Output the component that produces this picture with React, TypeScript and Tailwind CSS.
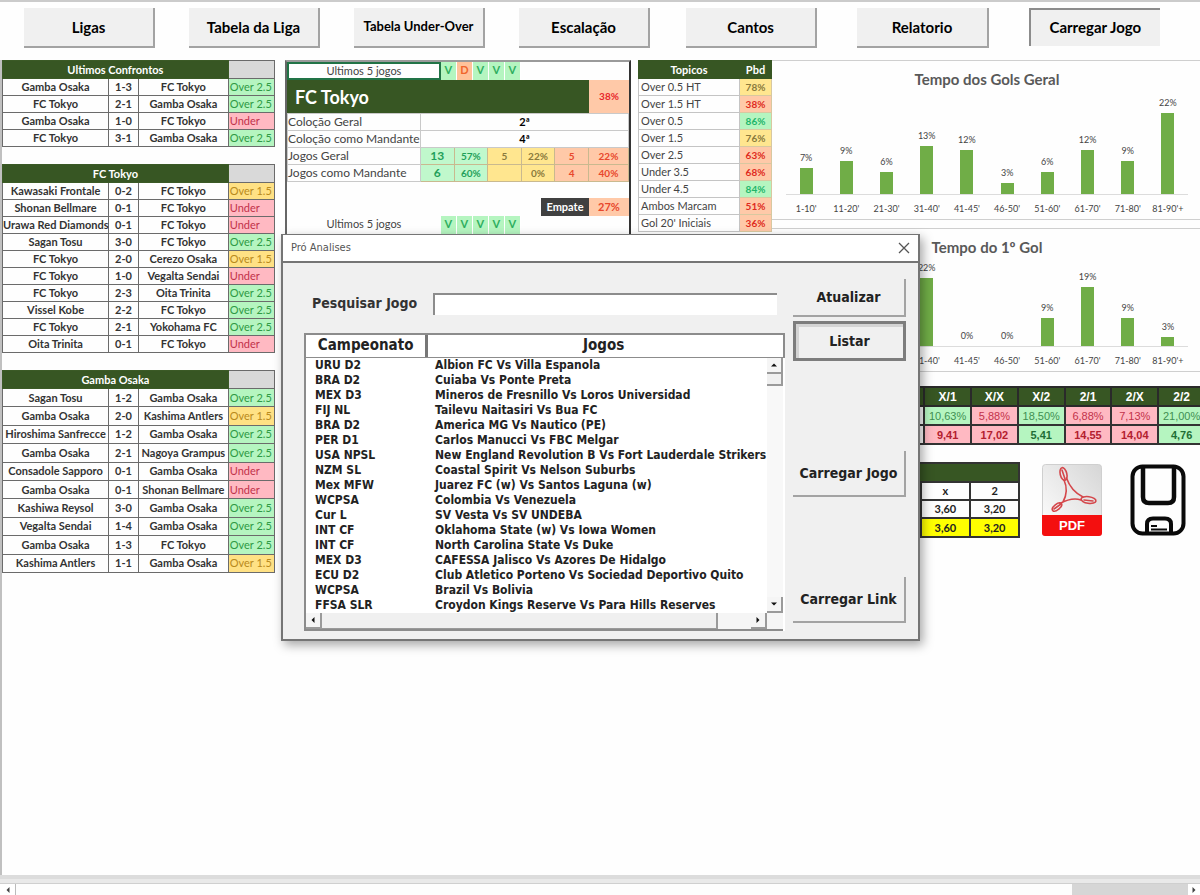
import React from 'react';

type Match = [string, string, string, string];

const lastMeetings: Match[] = [
  ['Gamba Osaka', '1-3', 'FC Tokyo', 'Over 2.5'],
  ['FC Tokyo', '2-1', 'Gamba Osaka', 'Over 2.5'],
  ['Gamba Osaka', '1-0', 'FC Tokyo', 'Under'],
  ['FC Tokyo', '3-1', 'Gamba Osaka', 'Over 2.5'],
];

const tokyoMatches: Match[] = [
  ['Kawasaki Frontale', '0-2', 'FC Tokyo', 'Over 1.5'],
  ['Shonan Bellmare', '0-1', 'FC Tokyo', 'Under'],
  ['Urawa Red Diamonds', '0-1', 'FC Tokyo', 'Under'],
  ['Sagan Tosu', '3-0', 'FC Tokyo', 'Over 2.5'],
  ['FC Tokyo', '2-0', 'Cerezo Osaka', 'Over 1.5'],
  ['FC Tokyo', '1-0', 'Vegalta Sendai', 'Under'],
  ['FC Tokyo', '2-3', 'Oita Trinita', 'Over 2.5'],
  ['Vissel Kobe', '2-2', 'FC Tokyo', 'Over 2.5'],
  ['FC Tokyo', '2-1', 'Yokohama FC', 'Over 2.5'],
  ['Oita Trinita', '0-1', 'FC Tokyo', 'Under'],
];

const gambaMatches: Match[] = [
  ['Sagan Tosu', '1-2', 'Gamba Osaka', 'Over 2.5'],
  ['Gamba Osaka', '2-0', 'Kashima Antlers', 'Over 1.5'],
  ['Hiroshima Sanfrecce', '1-2', 'Gamba Osaka', 'Over 2.5'],
  ['Gamba Osaka', '2-1', 'Nagoya Grampus', 'Over 2.5'],
  ['Consadole Sapporo', '0-1', 'Gamba Osaka', 'Under'],
  ['Gamba Osaka', '0-1', 'Shonan Bellmare', 'Under'],
  ['Kashiwa Reysol', '3-0', 'Gamba Osaka', 'Over 2.5'],
  ['Vegalta Sendai', '1-4', 'Gamba Osaka', 'Over 2.5'],
  ['Gamba Osaka', '1-3', 'FC Tokyo', 'Over 2.5'],
  ['Kashima Antlers', '1-1', 'Gamba Osaka', 'Over 1.5'],
];

const resultColors: Record<string, string> = {
  'Over 2.5': 'bg-[#b5f5c0] text-[#2f9a45]',
  'Over 1.5': 'bg-[#ffe184] text-[#b98a1c]',
  Under: 'bg-[#ffb9c2] text-[#c2324a]',
};

const GREEN = 'bg-[#c0f8cc] text-[#1fa05a]';
const YELLOW = 'bg-[#ffe68f] text-[#8a7a3c]';
const ORANGE = 'bg-[#ffc9a8] text-[#e8472c]';

const topics = [
  ['Over 0.5 HT', '78%', 'bg-[#ffe68f] text-[#8a7a3c]'],
  ['Over 1.5 HT', '38%', 'bg-[#ffc9a8] text-[#e02b20]'],
  ['Over 0.5', '86%', 'bg-[#b5f5c0] text-[#1fb56a]'],
  ['Over 1.5', '76%', 'bg-[#ffe68f] text-[#8a7a3c]'],
  ['Over 2.5', '63%', 'bg-[#ffc9a8] text-[#e02b20]'],
  ['Under 3.5', '68%', 'bg-[#ffc9a8] text-[#e02b20]'],
  ['Under 4.5', '84%', 'bg-[#b5f5c0] text-[#1fb56a]'],
  ['Ambos Marcam', '51%', 'bg-[#ffc9a8] text-[#e02b20]'],
  ["Gol 20' Iniciais", '36%', 'bg-[#ffc9a8] text-[#e02b20]'],
];

interface Bar {
  label: string;
  value: number | null;
}

const goalTimes: Bar[] = [
  { label: "1-10'", value: 7 },
  { label: "11-20'", value: 9 },
  { label: "21-30'", value: 6 },
  { label: "31-40'", value: 13 },
  { label: "41-45'", value: 12 },
  { label: "46-50'", value: 3 },
  { label: "51-60'", value: 6 },
  { label: "61-70'", value: 12 },
  { label: "71-80'", value: 9 },
  { label: "81-90'+", value: 22 },
];

const firstGoalTimes: Bar[] = [
  { label: '', value: null },
  { label: '', value: null },
  { label: '', value: null },
  { label: "31-40'", value: 22 },
  { label: "41-45'", value: 0 },
  { label: "46-50'", value: 0 },
  { label: "51-60'", value: 9 },
  { label: "61-70'", value: 19 },
  { label: "71-80'", value: 9 },
  { label: "81-90'+", value: 3 },
];

const halfFull = [
  { name: 'X/1', pct: '10,63%', odd: '9,41', color: 'bg-[#b5f5c0] text-[#3f8f52]', oddColor: 'bg-[#ffb9c2] text-[#b3202f]' },
  { name: 'X/X', pct: '5,88%', odd: '17,02', color: 'bg-[#ffb9c2] text-[#c2324a]', oddColor: 'bg-[#ffb9c2] text-[#b3202f]' },
  { name: 'X/2', pct: '18,50%', odd: '5,41', color: 'bg-[#b5f5c0] text-[#3f8f52]', oddColor: 'bg-[#b5f5c0] text-[#1f6e35]' },
  { name: '2/1', pct: '6,88%', odd: '14,55', color: 'bg-[#ffb9c2] text-[#c2324a]', oddColor: 'bg-[#ffb9c2] text-[#b3202f]' },
  { name: '2/X', pct: '7,13%', odd: '14,04', color: 'bg-[#ffb9c2] text-[#c2324a]', oddColor: 'bg-[#ffb9c2] text-[#b3202f]' },
  { name: '2/2', pct: '21,00%', odd: '4,76', color: 'bg-[#b5f5c0] text-[#3f8f52]', oddColor: 'bg-[#b5f5c0] text-[#1f6e35]' },
];

const games = [
  ['URU D2', 'Albion FC Vs Villa Espanola'],
  ['BRA D2', 'Cuiaba Vs Ponte Preta'],
  ['MEX D3', 'Mineros de Fresnillo Vs Loros Universidad'],
  ['FIJ NL', 'Tailevu Naitasiri Vs Bua FC'],
  ['BRA D2', 'America MG Vs Nautico (PE)'],
  ['PER D1', 'Carlos Manucci Vs FBC Melgar'],
  ['USA NPSL', 'New England Revolution B Vs Fort Lauderdale Strikers'],
  ['NZM SL', 'Coastal Spirit Vs Nelson Suburbs'],
  ['Mex MFW', 'Juarez FC (w) Vs Santos Laguna (w)'],
  ['WCPSA', 'Colombia Vs Venezuela'],
  ['Cur L', 'SV Vesta Vs SV UNDEBA'],
  ['INT CF', 'Oklahoma State (w) Vs Iowa Women'],
  ['INT CF', 'North Carolina State Vs Duke'],
  ['MEX D3', 'CAFESSA Jalisco Vs Azores De Hidalgo'],
  ['ECU D2', 'Club Atletico Porteno Vs Sociedad Deportivo Quito'],
  ['WCPSA', 'Brazil Vs Bolivia'],
  ['FFSA SLR', 'Croydon Kings Reserve Vs Para Hills Reserves'],
];

const NavButton: React.FC<{ children: string; pressed?: boolean; small?: boolean }> = ({ children, pressed, small }) => (
  <button
    className={`flex-1 whitespace-nowrap bg-[#f0f0f0] font-bold text-black ${small ? 'text-[13px]' : 'text-[15px]'} ${
      pressed
        ? 'h-[38px] border-t-2 border-l-2 border-[#8c8c8c] pb-0.5'
        : 'h-10 border-r-2 border-b-2 border-[#a3a3a3]'
    }`}
  >
    {children}
  </button>
);

const MatchTable: React.FC<{ title: string; rows: Match[]; className?: string }> = ({ title, rows, className = '' }) => (
  <table className={`w-full table-fixed border-collapse text-center text-[11px] leading-4 font-bold text-[#333] ${className}`}>
    <colgroup>
      <col className="w-[39%]" />
      <col className="w-[11%]" />
      <col className="w-[33%]" />
      <col className="w-[17%]" />
    </colgroup>
    <thead>
      <tr className="h-[18px]">
        <th colSpan={3} className="border border-[#3b5a26] bg-[#375623] p-0 text-white">{title}</th>
        <td className="border border-[#6b6b6b] bg-[#d9d9d9] p-0"></td>
      </tr>
    </thead>
    <tbody>
      {rows.map(([home, score, away, result], i) => (
        <tr key={i} className="h-[17px]">
          <td className="border border-[#6b6b6b] p-0 whitespace-nowrap">{home}</td>
          <td className="border border-[#6b6b6b] p-0">{score}</td>
          <td className="border border-[#6b6b6b] p-0 whitespace-nowrap">{away}</td>
          <td className={`border border-[#6b6b6b] p-0 pl-px text-left font-normal whitespace-nowrap ${resultColors[result]}`}>
            {result}
          </td>
        </tr>
      ))}
    </tbody>
  </table>
);

const LastFive: React.FC<{ results: string[]; selected?: boolean }> = ({ results, selected }) => (
  <div className="flex h-[18px] text-[11px] leading-4">
    <div className={`w-[45%] text-center text-[#444] ${selected ? 'border-2 border-[#217346] leading-[14px]' : ''}`}>
      Ultimos 5 jogos
    </div>
    {results.map((r, i) => (
      <span
        key={i}
        className={`w-4 border-r border-white text-center font-bold ${
          r === 'V' ? 'bg-[#b5f5c0] text-[#2fae5f]' : 'bg-[#ffc29a] text-[#f0642c]'
        }`}
      >
        {r}
      </span>
    ))}
  </div>
);

const StatRow: React.FC<{ label: string; cells: string[] }> = ({ label, cells }) => (
  <tr className="h-[17px]">
    <td className="border border-[#c9c9c9] p-0 text-xs leading-4 whitespace-nowrap">{label}</td>
    {cells.map((c, i) => (
      <td
        key={i}
        className={`border border-[#c9b98f] p-0 text-center leading-4 font-bold ${i < 2 ? GREEN : i < 4 ? YELLOW : ORANGE} ${
          i === 0 ? 'text-xs' : 'text-[10px]'
        }`}
      >
        {c}
      </td>
    ))}
  </tr>
);

const TeamPanel = () => (
  <section className="border-t-2 border-r-2 border-l-2 border-t-[#9a9a9a] border-r-[#333] border-l-[#666] text-[#444]">
    <LastFive results={['V', 'D', 'V', 'V', 'V']} selected />
    <div className="flex h-[33px] items-center">
      <h2 className="flex h-full flex-1 items-center bg-[#375623] pl-2 text-lg font-bold text-white">FC Tokyo</h2>
      <span className="flex h-full w-10 items-center justify-center bg-[#ffc9a8] text-[10px] font-bold text-[#e8272c]">38%</span>
    </div>
    <table className="w-full table-fixed border-collapse">
      <colgroup>
        <col className="w-[39%]" />
        <col span={5} />
        <col className="w-10" />
      </colgroup>
      <tbody>
        <tr className="h-[17px]">
          <td className="border border-[#c9c9c9] p-0 text-xs leading-4">Coloção Geral</td>
          <td colSpan={6} className="border border-[#c9c9c9] p-0 text-center text-[11px] leading-4 font-bold text-black">2ª</td>
        </tr>
        <tr className="h-[17px]">
          <td className="border border-[#c9c9c9] p-0 text-xs leading-4 whitespace-nowrap">Coloção como Mandante</td>
          <td colSpan={6} className="border border-[#c9c9c9] p-0 text-center text-[11px] leading-4 font-bold text-black">4ª</td>
        </tr>
        <StatRow label="Jogos Geral" cells={['13', '57%', '5', '22%', '5', '22%']} />
        <StatRow label="Jogos como Mandante" cells={['6', '60%', '', '0%', '4', '40%']} />
      </tbody>
    </table>
    <div className="mt-4 flex h-[18px] justify-end text-[11px] leading-[18px] font-bold">
      <span className="w-12 bg-[#404040] text-center text-white">Empate</span>
      <span className="w-10 bg-[#ffc9a8] text-center text-[#e8472c]">27%</span>
    </div>
    <LastFive results={['V', 'V', 'V', 'V', 'V']} />
    <div className="h-8 bg-[#375623]" />
  </section>
);

const TopicsTable = () => (
  <table className="w-full table-fixed border-collapse text-[#444]">
    <colgroup>
      <col />
      <col className="w-8" />
    </colgroup>
    <thead>
      <tr className="h-[18px] bg-[#375623] text-[11px] leading-4 text-white">
        <th className="border border-[#375623] p-0">Topicos</th>
        <th className="border border-[#375623] border-l-[#8aa07a] p-0">Pbd</th>
      </tr>
    </thead>
    <tbody>
      {topics.map(([name, pct, color]) => (
        <tr key={name} className="h-[17px]">
          <td className="border border-[#c4c4c4] p-0 pl-0.5 text-[11px] leading-4 whitespace-nowrap">{name}</td>
          <td className={`border border-[#d8c8a0] p-0 text-center text-[10px] leading-4 font-bold ${color}`}>{pct}</td>
        </tr>
      ))}
    </tbody>
  </table>
);

interface ChartProps {
  title: string;
  bars: Bar[];
  scale: number;
  plotClass: string;
}

const BarChart: React.FC<ChartProps> = ({ title, bars, scale, plotClass }) => (
  <figure className="border-y border-[#cfcfcf] pt-2 pr-3 pb-1 pl-3.5">
    <figcaption className="text-center text-[15px] leading-5 font-bold text-[#595959]">{title}</figcaption>
    <div className={`flex items-end border-b border-[#dcdcdc] ${plotClass}`}>
      {bars.map((bar, i) => (
        <div key={i} className="flex flex-1 flex-col items-center">
          {bar.value !== null && (
            <>
              <span className="pb-1 text-[9px] leading-3 text-[#444]">{bar.value}%</span>
              <div className="w-[13px] bg-[#70ad47]" style={{ height: bar.value * scale }} />
            </>
          )}
        </div>
      ))}
    </div>
    <div className="flex pt-2 text-center text-[9px] leading-3 text-[#444]">
      {bars.map((bar, i) => (
        <span key={i} className="flex-1 whitespace-nowrap">{bar.label}</span>
      ))}
    </div>
  </figure>
);

const HalfFullTable = () => (
  <table className="w-[calc(100%+6px)] table-fixed border-collapse text-center font-['Liberation_Sans',Arial,sans-serif] text-[11px] leading-4">
    <colgroup>
      <col className="w-[35%]" />
      <col span={6} />
    </colgroup>
    <thead>
      <tr className="h-[19px] bg-[#375623] text-xs text-white">
        <td className="border-2 border-[#2a2a2a] p-0"></td>
        {halfFull.map((h) => (
          <th key={h.name} className="border-2 border-[#2a2a2a] p-0">{h.name}</th>
        ))}
      </tr>
    </thead>
    <tbody>
      <tr className="h-[19px]">
        <td className="border-2 border-[#333] p-0"></td>
        {halfFull.map((h) => (
          <td key={h.name} className={`border-2 border-[#333] p-0 ${h.color}`}>{h.pct}</td>
        ))}
      </tr>
      <tr className="h-[19px] font-bold">
        <td className="border-2 border-[#333] p-0"></td>
        {halfFull.map((h) => (
          <td key={h.name} className={`border-2 border-[#333] p-0 ${h.oddColor}`}>{h.odd}</td>
        ))}
      </tr>
    </tbody>
  </table>
);

const OddsTable = () => (
  <table className="w-[58%] table-fixed border-collapse text-center text-[11px] leading-4 font-bold text-[#222]">
    <colgroup>
      <col className="w-[60%]" />
      <col span={2} />
    </colgroup>
    <tbody>
      <tr className="h-[19px]">
        <td colSpan={3} className="border-2 border-[#333] bg-[#375623] p-0"></td>
      </tr>
      <tr className="h-[18px]">
        <td className="border-2 border-[#333] p-0"></td>
        <th className="border-2 border-[#333] p-0">x</th>
        <th className="border-2 border-[#333] p-0">2</th>
      </tr>
      <tr className="h-[18px]">
        <td className="border-2 border-[#333] p-0"></td>
        <td className="border-2 border-[#333] p-0">3,60</td>
        <td className="border-2 border-[#333] p-0">3,20</td>
      </tr>
      <tr className="h-[19px] bg-[#ffff00]">
        <td className="border-2 border-[#333] p-0"></td>
        <td className="border-2 border-[#333] p-0">3,60</td>
        <td className="border-2 border-[#333] p-0">3,20</td>
      </tr>
    </tbody>
  </table>
);

const PdfIcon = () => (
  <svg viewBox="0 0 60 72" className="h-[72px] w-[60px]">
    <defs>
      <linearGradient id="paper" x1="0" y1="1" x2="1" y2="0">
        <stop offset="0" stopColor="#ffffff" />
        <stop offset="1" stopColor="#d6d6d6" />
      </linearGradient>
    </defs>
    <rect x="0.5" y="0.5" width="59" height="71" rx="3" fill="url(#paper)" stroke="#cfcfcf" />
    <path d="M0 51h60v18a3 3 0 0 1-3 3H3a3 3 0 0 1-3-3z" fill="#f40f0f" />
    <g fill="none" stroke="#d4474b" strokeWidth="1.6" strokeLinejoin="round" strokeLinecap="round">
      <ellipse cx="21.500" cy="10" rx="3.300" ry="6.500" transform="rotate(-14 21.500 10)" />
      <ellipse cx="46.500" cy="36" rx="7.500" ry="3.300" transform="rotate(8 46.500 36)" />
      <ellipse cx="15" cy="43" rx="5.500" ry="2.800" transform="rotate(-38 15 43)" />
      <path d="M22 16Q27 27 21 38M24.500 14Q29 27 41 33M39 36Q30 33 18 39.500" />
      <path d="M20 6l3 9M12 45l7-5M42 36l9 1" />
    </g>
    <text x="30" y="66" textAnchor="middle" fontSize="13" fontWeight="700" fill="#fff" fontFamily="Liberation Sans, Arial, sans-serif">PDF</text>
  </svg>
);

const SaveIcon = () => (
  <svg viewBox="0 0 56 72" className="h-[72px] w-14" fill="none" stroke="#0a0a0a" strokeWidth="4">
    <rect x="2.500" y="2.500" width="51" height="67" rx="10" />
    <path d="M13 3V33Q13 39 19 39H38Q44 39 44 33V3" strokeWidth="4.500" />
    <path d="M17 69V60Q17 54.500 23 54.500H35Q41 54.500 41 60V69" />
    <path d="M21 62h6M21 65.500h16" strokeWidth="2" />
  </svg>
);

const DialogButton: React.FC<{ children: string; className: string }> = ({ children, className }) => (
  <button className={`w-full bg-[#f0f0f0] text-sm font-bold whitespace-nowrap text-[#222] ${className}`}>{children}</button>
);

const ArrowButton: React.FC<{ label: string; d: string }> = ({ label, d }) => (
  <button aria-label={label} className="flex size-4 items-center justify-center border-r-2 border-b-2 border-[#9a9a9a] bg-[#f5f5f5]">
    <svg viewBox="0 0 8 8" className="size-1.5">
      <path d={d} fill="#111" />
    </svg>
  </button>
);

const GamesList = () => (
  <div className="mt-[18px] bg-white">
    <div className="flex h-[25px] border-t-2 border-r-2 border-b border-l-2 border-[#8c8c8c] text-center text-[15px] leading-5 font-bold text-[#222]">
      <div className="w-[25%]">Campeonato</div>
      <div className="flex-1 border-l-[3px] border-[#777] pr-1">Jogos</div>
    </div>
    <div className="mr-0.5 border-b-2 border-l-2 border-[#8c8c8c]">
      <div className="flex">
        <table aria-label="Jogos" className="flex-1 table-fixed text-xs leading-[15px] font-bold text-[#222]">
          <tbody>
            {games.map(([league, game], i) => (
              <tr key={i}>
                <td className="w-[28%] p-0 pl-[9px]">{league}</td>
                <td className="p-0 whitespace-nowrap">{game}</td>
              </tr>
            ))}
          </tbody>
        </table>
        <div className="flex w-4 flex-col bg-[#f8f8f8]">
          <ArrowButton label="Para cima" d="M0 6L4 2L8 6Z" />
          <div className="h-3 border-r-2 border-b-2 border-[#9a9a9a] bg-[#f0f0f0]" />
          <div className="flex-1" />
          <ArrowButton label="Para baixo" d="M0 2L4 6L8 2Z" />
        </div>
      </div>
      <div className="flex h-4 bg-[#f5f5f5] pr-4">
        <ArrowButton label="Para a esquerda" d="M6 0L2 4L6 8Z" />
        <div className="w-[86%] border-r-2 border-b border-[#9a9a9a] bg-[#f0f0f0]" />
        <div className="flex-1" />
        <ArrowButton label="Para a direita" d="M2 0L6 4L2 8Z" />
      </div>
    </div>
  </div>
);

// Search window, floats over the sheet
const SearchDialog = () => (
  <div
    role="dialog"
    aria-label="Pró Analises"
    className="absolute top-[232px] left-[281px] w-[639px] border-2 border-t border-[#757575] bg-[#f0f0f0] font-['DejaVu_Sans_Condensed','DejaVu_Sans',sans-serif] shadow-[3px_4px_10px_rgba(0,0,0,0.35)]"
  >
    <div className="flex h-7 items-center justify-between border-b-2 border-[#757575] bg-white pr-2 pl-2 text-[#555]">
      <span className="text-[11px]">Pró Analises</span>
      <button aria-label="Fechar">
        <svg viewBox="0 0 12 12" className="size-3" stroke="#555" strokeWidth="1.300">
          <path d="M1 1L11 11M11 1L1 11" />
        </svg>
      </button>
    </div>
    <div className="flex gap-2 pt-4 pr-3 pb-2 pl-[21px]">
      <div className="flex-1">
        <div className="flex items-start pt-3.5 pr-2">
          <label htmlFor="search" className="w-[129px] pl-2 text-sm leading-5 font-bold whitespace-nowrap text-[#333]">Pesquisar Jogo</label>
          <input id="search" type="text" className="h-[22px] flex-1 border-t-2 border-l-2 border-[#8c8c8c] bg-white px-1 text-xs" />
        </div>
        <GamesList />
      </div>
      <div className="flex w-[113px] flex-col pb-2">
        <DialogButton className="h-[38px] border-r-2 border-b-2 border-[#a3a3a3]">Atualizar</DialogButton>
        <DialogButton className="mt-1 h-10 border-[3px] border-[#7d7d7d] shadow-[inset_3px_3px_0_#d4d4d4]">Listar</DialogButton>
        <DialogButton className="mt-[90px] h-[46px] border-r-2 border-b-2 border-[#a3a3a3]">Carregar Jogo</DialogButton>
        <DialogButton className="mt-auto h-[46px] border-r-2 border-b-2 border-[#a3a3a3]">Carregar Link</DialogButton>
      </div>
    </div>
  </div>
);

const App = () => {
  return (
    <div className="relative flex min-h-screen flex-col overflow-hidden border-t-2 border-[#cbcbcb] bg-[#fefefe] font-['Lato','Liberation_Sans',sans-serif]">
      <nav className="grid grid-cols-[626fr_474fr] gap-9 pt-1.5 pr-10 pb-3 pl-6">
        <div className="flex items-start gap-[34px]">
          <NavButton>Ligas</NavButton>
          <NavButton>Tabela da Liga</NavButton>
          <NavButton small>Tabela Under-Over</NavButton>
          <NavButton>Escalação</NavButton>
        </div>
        <div className="flex items-start gap-10">
          <NavButton>Cantos</NavButton>
          <NavButton>Relatorio</NavButton>
          <NavButton pressed>Carregar Jogo</NavButton>
        </div>
      </nav>

      <main className="grid flex-1 grid-cols-[283fr_353fr_134fr_428fr] items-start border-l-2 border-[#c0c0c0]">
        <div className="flex flex-col gap-[17px] pr-2.5">
          <MatchTable title="Ultimos Confrontos" rows={lastMeetings} />
          <MatchTable title="FC Tokyo" rows={tokyoMatches} />
          <MatchTable title="Gamba Osaka" rows={gambaMatches} className="h-[203px]" />
        </div>
        <div className="pr-[7px]">
          <TeamPanel />
        </div>
        <TopicsTable />
        <div>
          <BarChart title="Tempo dos Gols Geral" bars={goalTimes} scale={3.7} plotClass="h-[106px]" />
          <div className="mt-2">
            <BarChart title="Tempo do 1º Gol" bars={firstGoalTimes} scale={3.1} plotClass="h-[90px]" />
          </div>
          <div className="mt-3.5">
            <HalfFullTable />
          </div>
          <div className="mt-[17px] flex items-start">
            <OddsTable />
            <div className="flex gap-7 pt-0.5 pl-[22px]">
              <PdfIcon />
              <SaveIcon />
            </div>
          </div>
        </div>
      </main>

      <footer className="border-t-4 border-[#dcdcdc] bg-[#e9e9e9] pt-1">
        <div className="flex h-3 border-t border-[#cfcfcf] bg-[#d6d6d6]">
          <button aria-label="Rolar para a esquerda" className="flex w-4 items-center justify-center border-r border-[#bbb] bg-white">
            <svg viewBox="0 0 8 8" className="size-1.5"><path d="M6 0L2 4L6 8Z" fill="#444" /></svg>
          </button>
          <div className="w-[88%] bg-[#fdfdfd]" />
          <div className="flex-1" />
          <button aria-label="Rolar para a direita" className="flex w-3 items-center justify-center bg-white">
            <svg viewBox="0 0 8 8" className="size-1.5"><path d="M2 0L6 4L2 8Z" fill="#444" /></svg>
          </button>
        </div>
      </footer>

      <SearchDialog />
    </div>
  );
};

export default App;
